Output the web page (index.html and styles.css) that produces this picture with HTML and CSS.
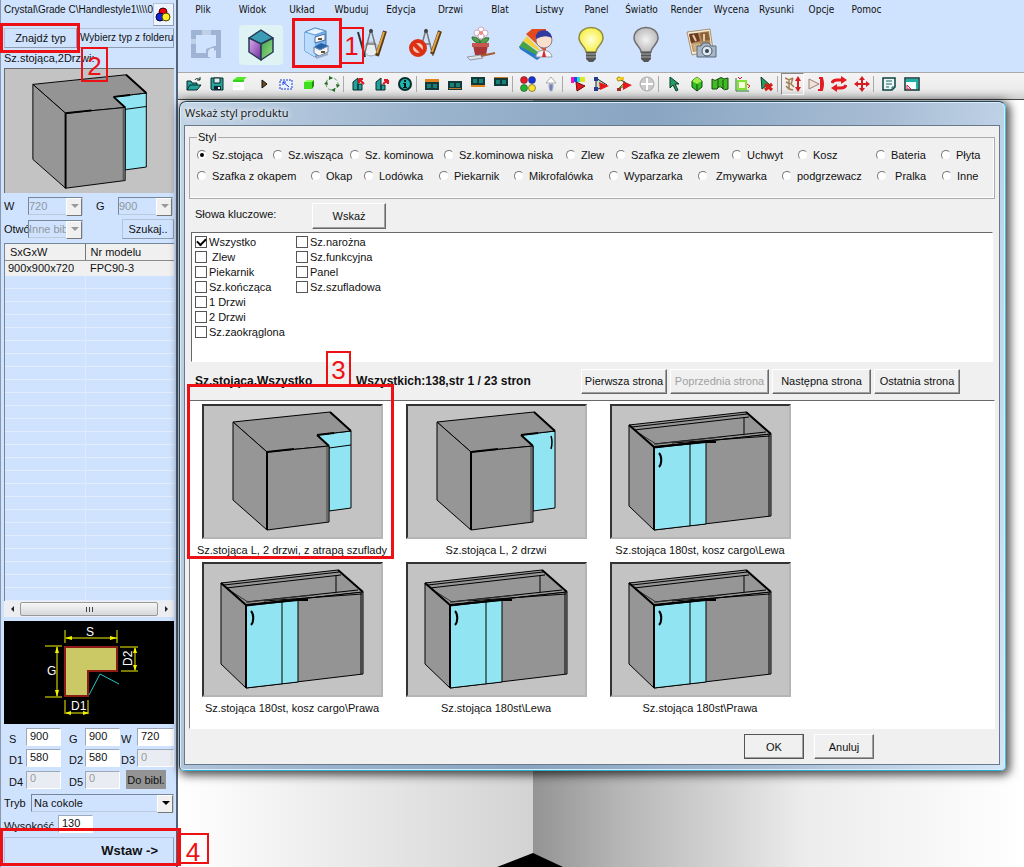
FILE: index.html
```html
<!DOCTYPE html>
<html lang="pl">
<head>
    <meta charset="UTF-8">
    <meta name="viewport" content="width=device-width, initial-scale=1.0">
    <title>Wskaż styl produktu</title>
    <link rel="stylesheet" href="styles.css">
</head>
<body>
    <!-- Shared cabinet drawings -->
    <svg class="defs" width="0" height="0" aria-hidden="true">
        <symbol id="corner" viewBox="0 0 177 131">
            <g stroke="#000" stroke-width="1" stroke-linejoin="round">
                <path d="M113 29L147 25V102L125 105V40Z" fill="#91e5f2"/>
                <path d="M29 16L126 6L147 25L113 29L125 40L63 46Z" fill="#949494"/>
                <path d="M29 16L63 46V124L29 94Z" fill="#969696"/>
                <path d="M63 46L125 40V116L63 124Z" fill="#949494"/>
                <path d="M123 41V116" stroke="#444"/>
                <path d="M126 6L147 25M113 29L125 40M63 46V124M63 46L90 43M113 29L130 27" fill="none" stroke-width="2"/>
            </g>
        </symbol>
        <symbol id="blind" viewBox="0 0 177 131">
            <g stroke="#000" stroke-width="1" stroke-linejoin="round" fill="none">
                <path d="M17 19L134 6L159 28L42 41Z" fill="#969696"/>
                <path d="M17 19L42 41V124L17 100Z" fill="#969696"/>
                <path d="M42 41L159 28V110L42 124Z" fill="#949494"/>
                <path d="M42 42L94 36V118L42 124Z" fill="#91e5f2"/>
                <path d="M78 38V120M157 29V110M132 12V28M22 24L137 11M20 21L135 8M42 38L154 26M60 37L158 30"/>
                <path d="M22 24L44 38L110 31" stroke="#333"/>
                <path d="M17 19L42 41L94 36M134 6L159 28M93 36H104M42 41V124" stroke-width="2"/>
                <path d="M47 47C50 50 50 58 47 61" stroke-width="2"/>
            </g>
        </symbol>
    </svg>

    <aside class="sidebar">
        <div class="path-row">
            <span class="path">Crystal\Grade C\Handlestyle1\\\\0</span>
            <button class="side-button color-button" aria-label="Kolory">
                <svg width="16" height="16" viewBox="0 0 16 16"><circle cx="8" cy="5" r="4" fill="#f00010" stroke="#400"/><circle cx="5" cy="10" r="4" fill="#1526d8" stroke="#003"/><circle cx="11" cy="10" r="4" fill="#ffec22" stroke="#440"/></svg>
            </button>
        </div>
        <div class="type-row">
            <div class="marked">
                <button class="side-button">Znajdź typ</button>
                <span class="frame frame-type"></span>
                <span class="badge badge-type">2</span>
            </div>
            <button class="side-button folder-button">Wybierz typ z folderu</button>
        </div>
        <div class="type-name">Sz.stojąca,2Drzwi:</div>
        <svg class="preview" viewBox="0 0 177 129" preserveAspectRatio="xMinYMin slice" role="img" aria-label="Szafka">
            <use href="#corner" width="177" height="131"/>
            <path d="M125 42L147 39" stroke="#000"/>
        </svg>
        <div class="filter-row">
            <label for="fw">W</label>
            <span class="select disabled"><select id="fw" disabled><option>720</option></select></span>
            <label for="fg" class="middle">G</label>
            <span class="select disabled"><select id="fg" disabled><option>900</option></select></span>
        </div>
        <div class="filter-row">
            <label for="fo">Otwó</label>
            <span class="select disabled"><select id="fo" disabled><option>Inne bib</option></select></span>
            <button class="side-button search-button">Szukaj..</button>
        </div>
        <div class="models">
            <table>
                <thead><tr><th>SxGxW</th><th>Nr modelu</th></tr></thead>
                <tbody><tr><td>900x900x720</td><td>FPC90-3</td></tr></tbody>
            </table>
        </div>
        <div class="scrollbar">
            <button class="arrow arrow-left" aria-label="W lewo"></button>
            <div class="thumb"><i></i><i></i><i></i></div>
            <button class="arrow arrow-right" aria-label="W prawo"></button>
        </div>
        <svg class="plan" viewBox="0 0 170 103">
            <path d="M61 26H113V50H84V75H61Z" fill="#cbc866" stroke="#8c1c14" stroke-width="2"/>
            <g stroke="#f4f400" fill="none">
                <path d="M61 9V22M113 9V22M62 17H113M41 25H58M41 76H58M53 26V75M116 26H134M117 50H134M131 27V49M61 79V93M84 79V93M62 92H84"/>
            </g>
            <path d="M61 17l7-2v4zM113 17l-7-2v4zM53 25l-2 7h4zM53 76l-2-7h4zM131 26l-2 6h4zM131 50l-2-6h4zM61 92l6-2v4zM85 92l-6-2v4z" fill="#f4f400"/>
            <path d="M85 74L96 53L115 63" stroke="#25c4c4" fill="none"/>
            <g class="plan-text">
                <text x="82" y="15">S</text>
                <text x="43" y="54">G</text>
                <text x="67" y="89">D1</text>
                <text x="128" y="45" transform="rotate(-90 128 45)">D2</text>
            </g>
        </svg>
        <div class="sizes">
            <label for="s">S</label><input id="s" type="text" value="900">
            <label for="g">G</label><input id="g" type="text" value="900">
            <label for="w">W</label><input id="w" type="text" value="720">
            <label for="d1">D1</label><input id="d1" type="text" value="580">
            <label for="d2">D2</label><input id="d2" type="text" value="580">
            <label for="d3">D3</label><input id="d3" type="text" value="0" disabled>
            <label for="d4">D4</label><input id="d4" type="text" value="0" disabled>
            <label for="d5">D5</label><input id="d5" type="text" value="0" disabled>
            <button class="library-button">Do bibl.</button>
        </div>
        <div class="mode-row">
            <label for="mode">Tryb</label>
            <span class="select"><select id="mode"><option>Na cokole</option></select></span>
        </div>
        <div class="height-row">
            <label for="height">Wysokość</label>
            <input id="height" type="text" value="130">
        </div>
        <div class="marked insert-row">
            <button class="side-button insert-button">Wstaw -&gt;</button>
            <span class="frame frame-insert"></span>
            <span class="badge badge-insert">4</span>
        </div>
    </aside>

    <main class="workspace">
        <nav class="menu">
            <button>Plik</button>
            <button>Widok</button>
            <button>Układ</button>
            <button>Wbuduj</button>
            <button>Edycja</button>
            <button>Drzwi</button>
            <button>Blat</button>
            <button>Listwy</button>
            <button>Panel</button>
            <button>Światło</button>
            <button>Render</button>
            <button>Wycena</button>
            <button>Rysunki</button>
            <button>Opcje</button>
            <button>Pomoc</button>
        </nav>

        <div class="ribbon">
            <button aria-label="Pomieszczenie">
                <svg width="36" height="36" viewBox="0 0 36 36"><path d="M3 4H33V32H28V24L22 26V32H3ZM8 9V27H18V23L26 20H28V9Z" fill="#9fb4d4" fill-rule="evenodd"/><path d="M14 4h9v5h-9zM3 13h5v5H3z" fill="#bfd0e8"/><path d="M20 31V27C20 23 23 22 26 22V31Z" fill="#d5e4fa"/></svg>
            </button>
            <button class="active" aria-label="Widok 3D">
                <svg width="36" height="36" viewBox="0 0 36 36"><defs><linearGradient id="cube-l" x1="0" y1="0" x2="1" y2="1"><stop offset="0" stop-color="#dcb0ee"/><stop offset="1" stop-color="#6f2b9a"/></linearGradient><linearGradient id="cube-r" x1="0" y1="0" x2="1" y2="1"><stop offset="0" stop-color="#3f9d46"/><stop offset="1" stop-color="#9be58c"/></linearGradient></defs><g stroke="#263a55" stroke-width="1.5" stroke-linejoin="round"><path d="M6 11L18 3L30 11L18 17Z" fill="#3c9bb5"/><path d="M6 11L18 17V33L6 25Z" fill="url(#cube-l)"/><path d="M18 17L30 11V25L18 33Z" fill="url(#cube-r)"/></g></svg>
            </button>
            <div class="marked">
                <button aria-label="Szafki">
                    <svg width="36" height="36" viewBox="0 0 36 36"><path d="M7 6L17 2L28 5L28 25L17 31L7 25Z" fill="#7fb5ee" stroke="#3d78be"/><path d="M7 6L17 9V31L7 25Z" fill="#b9dcff"/><path d="M7 6L17 2L28 5L17 9Z" fill="#e5f4ff" stroke="#5d97d5"/><path d="M17 11L27 8V14L17 17Z" fill="#f7f9fc" stroke="#486f9e"/><path d="M16 21L23 17L31 20L24 24Z" fill="#2762a8"/><path d="M16 21L22 24L30 20V26L21 30L16 27Z" fill="#f5f5f8" stroke="#66809f"/><path d="M20 13h4M23 26h4" stroke="#65512f" stroke-width="2"/><path d="M18 32L30 28" stroke="#9cabc0" stroke-width="2"/></svg>
                </button>
                <span class="frame frame-icon"></span>
                <span class="badge badge-icon">1</span>
            </div>
            <button aria-label="Projekt">
                <svg width="36" height="36" viewBox="0 0 36 36"><circle cx="18" cy="23" r="7" fill="#e9eef2" stroke="#9ba6b0"/><path d="M18 3L11 30M18 3L25 30M13 18H23" stroke="#777" stroke-width="1.5" fill="none"/><path d="M5 6L12 31" stroke="#333" stroke-width="2"/><path d="M32 5L24 30" stroke="#593b16" stroke-width="4"/><path d="M31 6L24 27" stroke="#e2a340" stroke-width="2"/><circle cx="18" cy="5" r="2" fill="#444"/></svg>
            </button>
            <button aria-label="Usuń projekt">
                <svg width="36" height="36" viewBox="0 0 36 36"><path d="M18 3L11 30M18 3L25 30M13 18H23" stroke="#777" stroke-width="1.5" fill="none"/><circle cx="18" cy="5" r="2" fill="#444"/><path d="M32 5L24 28" stroke="#593b16" stroke-width="4"/><path d="M31 6L24 26" stroke="#e2a340" stroke-width="2"/><circle cx="10" cy="22" r="7" fill="#f8c5b5" stroke="#dc3014" stroke-width="4"/><path d="M5 17L15 27" stroke="#dc3014" stroke-width="4"/></svg>
            </button>
            <button aria-label="Dodatki">
                <svg width="36" height="36" viewBox="0 0 36 36"><path d="M17 18V10M17 17C12 17 9 14 9 11C14 11 17 13 17 17C18 13 22 11 26 12C25 16 22 18 17 18" fill="#50a04a" stroke="#2b6b2c"/><g fill="#fff" stroke="#d6a5b5"><circle cx="18" cy="4" r="3"/><circle cx="14" cy="7" r="3"/><circle cx="22" cy="7" r="3"/><circle cx="18" cy="10" r="3"/></g><circle cx="18" cy="7" r="2" fill="#ed8a85"/><path d="M10 19H25L23 29H12Z" fill="#a63736"/><path d="M9 17H26V21H9Z" fill="#c65750"/><path d="M4 31L18 29L20 32L7 34Z" fill="#dfe4e8" stroke="#8b98a5"/><path d="M18 30L32 27" stroke="#a85f35" stroke-width="2"/></svg>
            </button>
            <button aria-label="Kolory">
                <svg width="36" height="36" viewBox="0 0 36 36"><path d="M1 21L5 15L24 29L20 33Z" fill="#46a346"/><path d="M2 23L19 34L23 31L1 20Z" fill="#2a78cb"/><path d="M5 15L9 10L26 28Z" fill="#f2d23f"/><path d="M8 8L14 3L28 3L28 27Z" fill="#e24a1d"/><path d="M18 31C18 22 33 22 34 31Z" fill="#f4f4f8" stroke="#99a"/><circle cx="26" cy="14" r="8" fill="#f9dfcd" stroke="#8b7a80"/><path d="M18 13C16 2 33 1 34 12Q27 8 18 13" fill="#303b9e"/><path d="M26 23L24 31H28Z" fill="#d9242b"/></svg>
            </button>
            <button aria-label="Włącz światło">
                <svg width="36" height="38" viewBox="0 0 36 38"><defs><radialGradient id="lit"><stop offset="0" stop-color="#ffffd8"/><stop offset="1" stop-color="#f7ef47"/></radialGradient></defs><path d="M13 27C13 22 6 19 6 13C6 -1 30 -1 30 13C30 19 23 22 23 27Z" fill="url(#lit)" stroke="#8f8a45" stroke-width="1.5"/><path d="M13 27H23V34L20 37H16L13 34Z" fill="#555"/><path d="M13 29H23M13 32H23" stroke="#aaa"/></svg>
            </button>
            <button aria-label="Wyłącz światło">
                <svg width="36" height="38" viewBox="0 0 36 38"><defs><radialGradient id="unlit"><stop offset="0" stop-color="#f3f3f3"/><stop offset="1" stop-color="#bcbcbc"/></radialGradient></defs><path d="M13 27C13 22 6 19 6 13C6 -1 30 -1 30 13C30 19 23 22 23 27Z" fill="url(#unlit)" stroke="#707070" stroke-width="1.5"/><path d="M13 27H23V34L20 37H16L13 34Z" fill="#555"/><path d="M13 29H23M13 32H23" stroke="#aaa"/></svg>
            </button>
            <button aria-label="Zdjęcia">
                <svg width="36" height="36" viewBox="0 0 36 36"><path d="M4 6L27 3L30 24L9 29Z" fill="#f5ead3" stroke="#aa9270"/><path d="M6 8L26 5L28 22L10 26Z" fill="#b08a60"/><path d="M6 8L15 7L17 15L8 17Z" fill="#6b3a22"/><path d="M17 7L25 6L27 14L19 15Z" fill="#8a6038"/><path d="M9 18L17 17L18 24L11 25Z" fill="#cfae84"/><path d="M10 9L13 15M21 8V15" stroke="#e7c79f" stroke-width="2"/><path d="M14 20H18L20 17H26L28 20H33V31H14Z" fill="#a9b6c4" stroke="#596a7c"/><circle cx="24" cy="25" r="5" fill="#e1e8ef" stroke="#46586b"/><circle cx="24" cy="25" r="2" fill="#31455c"/></svg>
            </button>
        </div>

        <div class="toolbar">
            <button aria-label="Otwórz"><svg width="16" height="16" viewBox="0 0 16 16"><path d="M1 14V5H5L6 7H11V9M1 14L4 9H15L11 14Z" fill="#27a29b" stroke="#062d2c"/><path d="M9 4C10 2 12 2 14 4M14 1V4H11" fill="none" stroke="#062d2c"/></svg></button>
            <button aria-label="Zapisz"><svg width="16" height="16" viewBox="0 0 16 16"><path d="M2 2H14V14H3L2 13Z" fill="#27a29b" stroke="#062d2c"/><path d="M5 2H11V7H5Z" fill="#e3eeee" stroke="#062d2c"/><path d="M5 10H12V14H5Z" fill="#123"/><path d="M9 11h2v2H9z" fill="#fff"/></svg></button>
            <button aria-label="Blat"><svg width="16" height="16" viewBox="0 0 16 16"><path d="M1 4L5 1H15L12 4Z" fill="#58e62d"/><path d="M1 5H12V14H1Z" fill="#fff"/><path d="M12 4L15 1V10L12 14Z" fill="#eee"/><path d="M1 4H12V6H1Z" fill="#34d51d"/></svg></button>
            <button aria-label="Odtwórz"><svg width="16" height="16" viewBox="0 0 16 16"><path d="M7 4L12 8L7 12Z" fill="#6b4b20" stroke="#111"/></svg></button>
            <button aria-label="Zaznacz"><svg width="16" height="16" viewBox="0 0 16 16"><path d="M2 4H14V13H2Z" fill="#e6f2ff" stroke="#1c38d6" stroke-dasharray="2 1"/><path d="M5 6L11 11M5 9V6H8" stroke="#1c38d6" fill="none"/></svg></button>
            <button aria-label="Bryła"><svg width="16" height="16" viewBox="0 0 16 16"><path d="M3 6L6 4H13L11 6Z" fill="#8dff5a"/><path d="M3 6H11V13H3Z" fill="#3fde20"/><path d="M11 6L13 4V10L11 13Z" fill="#1c8c12"/></svg></button>
            <button aria-label="Obróć"><svg width="16" height="16" viewBox="0 0 16 16"><circle cx="8" cy="8" r="6" fill="none" stroke="#5a9a5a" stroke-dasharray="3 2"/><path d="M5 0L9 2L5 4ZM16 9L13 12L12 8ZM0 8L3 5L4 9ZM11 12L7 14L11 16Z" fill="#246c24"/></svg></button>
            <i class="separator"></i>
            <button aria-label="Import"><svg width="16" height="16" viewBox="0 0 16 16"><path d="M2 14V6L7 2V14ZM7 8H11V14H7Z" fill="#23a29b" stroke="#062d2c"/><path d="M8 3L13 8M8 3H12M8 3V7" stroke="#e31624" stroke-width="2"/></svg></button>
            <button aria-label="Eksport"><svg width="16" height="16" viewBox="0 0 16 16"><path d="M2 14V6L7 2V14ZM7 9H11V14H7Z" fill="#23a29b" stroke="#062d2c"/><path d="M9 8L14 4M14 4H10M14 4V8" stroke="#e31624" stroke-width="2"/></svg></button>
            <button aria-label="Informacje"><svg width="16" height="16" viewBox="0 0 16 16"><circle cx="8" cy="8" r="6" fill="#22b5ad" stroke="#072c2c" stroke-width="2"/><path d="M7 4h2v2H7zM6 7h3v4h1v1H6v-1h1V8H6z" fill="#041818"/></svg></button>
            <i class="separator"></i>
            <button aria-label="Góra"><svg width="16" height="16" viewBox="0 0 16 16"><path d="M1 3H15V6H1Z" fill="#df8520"/><path d="M1 6H15V14H1Z" fill="#123838"/><path d="M3 8H7V12H3ZM9 8H13V12H9Z" fill="#178077"/></svg></button>
            <button aria-label="Dół"><svg width="16" height="16" viewBox="0 0 16 16"><path d="M1 5H15V14H1Z" fill="#123838"/><path d="M3 7H7V11H3ZM9 7H13V11H9Z" fill="#178077"/><path d="M2 12H14V13H2Z" fill="#c47926"/></svg></button>
            <button aria-label="Lewo"><svg width="16" height="16" viewBox="0 0 16 16"><path d="M1 1H15V9H1Z" fill="#123838"/><path d="M3 3H7V7H3ZM9 3H13V7H9Z" fill="#178077"/><path d="M1 9H15V11H1Z" fill="#df8520"/></svg></button>
            <button aria-label="Prawo"><svg width="16" height="16" viewBox="0 0 16 16"><path d="M1 1H15V10H1Z" fill="#123838"/><path d="M3 4H7V8H3ZM9 4H13V8H9Z" fill="#178077"/><path d="M1 1H15V2H1Z" fill="#c47926"/></svg></button>
            <i class="separator"></i>
            <button aria-label="Materiały"><svg width="16" height="16" viewBox="0 0 16 16"><g stroke="#222" stroke-width=".5"><circle cx="4" cy="4" r="3.5" fill="#ed1724"/><circle cx="12" cy="4" r="3.5" fill="#1433dc"/><circle cx="4" cy="12" r="3.5" fill="#20b42c"/><circle cx="12" cy="12" r="3.5" fill="#ffe32b"/></g></svg></button>
            <button aria-label="Lampa"><svg width="16" height="16" viewBox="0 0 16 16"><path d="M8 1L13 7H3Z" fill="#fff" stroke="#aaa"/><path d="M6 8H10V12L9 15H7L6 12Z" fill="#7280b5" stroke="#aeb5cf"/></svg></button>
            <i class="separator"></i>
            <button aria-label="Paleta"><svg width="16" height="16" viewBox="0 0 16 16"><path d="M1 1H4V7H1Z" fill="#ed19bd"/><path d="M4 1H7V6H4Z" fill="#2643ef"/><path d="M7 1H10V6H7Z" fill="#24dbd8"/><path d="M10 1H15V6H10Z" fill="#dcea26"/><path d="M6 6L15 10L7 15Z" fill="#e7161d" stroke="#6f0a0a"/></svg></button>
            <button aria-label="Animacja"><svg width="16" height="16" viewBox="0 0 16 16"><path d="M3 2V14L14 9Z" fill="#bde2c9" stroke="#222"/><path d="M6 6L16 10L7 14Z" fill="#e7161d"/><path d="M1 1H5V5H1ZM1 11H5V15H1Z" fill="#273b8d"/></svg></button>
            <button aria-label="Trasa"><svg width="16" height="16" viewBox="0 0 16 16"><path d="M3 3L9 6L3 12L14 9Z" fill="#74d652" stroke="#663"/><path d="M7 6L16 9L7 14Z" fill="#e7161d"/><circle cx="3" cy="3" r="2" fill="#ffe32b" stroke="#a80"/><path d="M1 12H5V15H1Z" fill="#a32b20"/><path d="M4 1H8V4H4Z" fill="#efc52a"/></svg></button>
            <button aria-label="Cel"><svg width="16" height="16" viewBox="0 0 16 16"><circle cx="8" cy="8" r="7" fill="#c9c9c9" stroke="#aaa"/><path d="M8 2V14M2 8H14" stroke="#fff" stroke-width="2"/></svg></button>
            <i class="separator"></i>
            <button aria-label="Wskaźnik"><svg width="16" height="16" viewBox="0 0 16 16"><path d="M4 1L13 8H9L12 14L10 15L7 9L4 12Z" fill="#229e60" stroke="#0b3c27"/></svg></button>
            <button aria-label="Sześcian"><svg width="16" height="16" viewBox="0 0 16 16"><path d="M3 5L8 1L13 5V11L8 15L3 11Z" fill="#2fbe24" stroke="#17460f"/><path d="M3 5L8 8L13 5L8 1Z" fill="#a0ee47"/><path d="M8 8V15" stroke="#17460f"/></svg></button>
            <button aria-label="Plan"><svg width="18" height="16" viewBox="0 0 18 16"><path d="M1 3Q4 6 7 3T13 3L17 2V13Q13 15 11 12T6 13L1 13Z" fill="#40bb24" stroke="#164911"/><path d="M7 3V12M12 4V13" stroke="#164911"/></svg></button>
            <button aria-label="Wymiary"><svg width="16" height="16" viewBox="0 0 16 16"><path d="M1 2V15H14" fill="none" stroke="#1c7d33"/><path d="M3 5H11V13H3Z" fill="#f7ffe1" stroke="#84e32d" stroke-width="2"/><path d="M3 1L5 3L7 1M12 8L15 10L13 12" stroke="#e31624" fill="none"/></svg></button>
            <button aria-label="Usuń"><svg width="16" height="16" viewBox="0 0 16 16"><path d="M3 1L12 9L8 10L4 13Z" fill="#229e60" stroke="#0b3c27"/><path d="M7 8L14 14M14 8L7 14" stroke="#d51d18" stroke-width="3"/></svg></button>
            <i class="separator"></i>
            <button class="pressed" aria-label="Wysokość"><svg width="16" height="16" viewBox="0 0 16 16"><path d="M0 2L4 4L8 2M1 6L5 8M1 10L4 13L8 14M4 4V13M8 2L6 8L9 11" stroke="#a27d51" stroke-width="1.5" fill="none"/><path d="M13 4V12" stroke="#d51d23" stroke-width="2"/><path d="M13 0L16 5H10ZM13 16L16 11H10Z" fill="#d51d23"/></svg></button>
            <button aria-label="Odbicie"><svg width="16" height="16" viewBox="0 0 16 16"><path d="M1 3L11 8L1 13Z" fill="#ece4dc" stroke="#a27d71"/><path d="M11 2H14Q16 8 14 14H10M13 2V13" fill="none" stroke="#e31b23" stroke-width="2"/></svg></button>
            <button aria-label="Odwróć"><svg width="16" height="16" viewBox="0 0 16 16"><path d="M1 7Q2 4 6 4H11M15 9Q14 12 10 12H5" fill="none" stroke="#e31b23" stroke-width="3"/><path d="M10 0L16 4L10 8ZM6 8L0 12L6 16Z" fill="#e31b23"/></svg></button>
            <button aria-label="Przesuń"><svg width="16" height="16" viewBox="0 0 16 16"><path d="M8 3V13M3 8H13" stroke="#d51d23" stroke-width="2"/><path d="M8 0L11 4H5ZM8 16L11 12H5ZM0 8L4 5V11ZM16 8L12 5V11Z" fill="#d51d23"/></svg></button>
            <i class="separator"></i>
            <button aria-label="Notatka"><svg width="16" height="16" viewBox="0 0 16 16"><path d="M2 2H14V11L11 14H2Z" fill="#eef6f5" stroke="#0d4141" stroke-width="1.5"/><path d="M5 5H11M5 8H11M5 11H8M11 14V11H14" stroke="#126868" fill="none"/></svg></button>
            <button aria-label="Okno"><svg width="16" height="16" viewBox="0 0 16 16"><path d="M1 2H15V14H1Z" fill="#f4ffff" stroke="#0d3535" stroke-width="1.5"/><path d="M2 3H14V6H2ZM12 6H14V13H12Z" fill="#1cb2a8"/><path d="M3 13V9L7 13Z" fill="none" stroke="#e31b43"/></svg></button>
        </div>

        <div class="canvas">
            <svg class="floor" viewBox="0 0 846 14" preserveAspectRatio="none" aria-hidden="true"><path d="M319 14L355 0L385 14Z"/></svg>

            <section class="dialog" role="dialog" aria-labelledby="dialog-title">
                <h1 id="dialog-title">Wskaż styl produktu</h1>
                <div class="client">
                    <fieldset class="styles">
                        <legend>Styl</legend>
                        <div class="radios radios-top">
                            <label><input type="radio" name="style" checked>Sz.stojąca</label>
                            <label><input type="radio" name="style">Sz.wisząca</label>
                            <label><input type="radio" name="style">Sz. kominowa</label>
                            <label><input type="radio" name="style">Sz.kominowa niska</label>
                            <label><input type="radio" name="style">Zlew</label>
                            <label><input type="radio" name="style">Szafka ze zlewem</label>
                            <label><input type="radio" name="style">Uchwyt</label>
                            <label><input type="radio" name="style">Kosz</label>
                            <label><input type="radio" name="style">Bateria</label>
                            <label><input type="radio" name="style">Płyta</label>
                        </div>
                        <div class="radios radios-bottom">
                            <label><input type="radio" name="style">Szafka z okapem</label>
                            <label><input type="radio" name="style">Okap</label>
                            <label><input type="radio" name="style">Lodówka</label>
                            <label><input type="radio" name="style">Piekarnik</label>
                            <label><input type="radio" name="style">Mikrofalówka</label>
                            <label><input type="radio" name="style">Wyparzarka</label>
                            <label><input type="radio" name="style">&nbsp;Zmywarka</label>
                            <label><input type="radio" name="style">podgrzewacz</label>
                            <label><input type="radio" name="style">&nbsp;Pralka</label>
                            <label><input type="radio" name="style">Inne</label>
                        </div>
                    </fieldset>

                    <div class="keywords-row">
                        <span>Słowa kluczowe:</span>
                        <button class="button">Wskaż</button>
                    </div>
                    <div class="keywords">
                        <label><input type="checkbox" checked>Wszystko</label>
                        <label><input type="checkbox">&nbsp;Zlew</label>
                        <label><input type="checkbox">Piekarnik</label>
                        <label><input type="checkbox">Sz.kończąca</label>
                        <label><input type="checkbox">1 Drzwi</label>
                        <label><input type="checkbox">2 Drzwi</label>
                        <label><input type="checkbox">Sz.zaokrąglona</label>
                        <label><input type="checkbox">Sz.narożna</label>
                        <label><input type="checkbox">Sz.funkcyjna</label>
                        <label><input type="checkbox">Panel</label>
                        <label><input type="checkbox">Sz.szufladowa</label>
                    </div>

                    <div class="paging">
                        <strong class="current">Sz.stojąca,Wszystko</strong>
                        <strong class="count">Wszystkich:138,str 1 / 23 stron</strong>
                        <button class="button">Pierwsza strona</button>
                        <button class="button wide" disabled>Poprzednia strona</button>
                        <button class="button wide">Następna strona</button>
                        <button class="button">Ostatnia strona</button>
                    </div>

                    <div class="results">
                        <figure class="marked">
                            <svg viewBox="0 0 177 131"><use href="#corner"/><path d="M125 42L147 39" stroke="#000"/></svg>
                            <figcaption>Sz.stojąca L, 2 drzwi, z atrapą szuflady</figcaption>
                            <span class="frame frame-result"></span>
                            <span class="badge badge-result">3</span>
                        </figure>
                        <figure>
                            <svg viewBox="0 0 177 131"><use href="#corner"/><path d="M143 30Q145 36 143 43" fill="none" stroke="#000" stroke-width="1.5"/></svg>
                            <figcaption>Sz.stojąca L, 2 drzwi</figcaption>
                        </figure>
                        <figure>
                            <svg viewBox="0 0 177 131"><use href="#blind"/></svg>
                            <figcaption>Sz.stojąca 180st, kosz cargo\Lewa</figcaption>
                        </figure>
                        <figure>
                            <svg viewBox="0 0 177 131"><use href="#blind"/></svg>
                            <figcaption>Sz.stojąca 180st, kosz cargo\Prawa</figcaption>
                        </figure>
                        <figure>
                            <svg viewBox="0 0 177 131"><use href="#blind"/></svg>
                            <figcaption>Sz.stojąca 180st\Lewa</figcaption>
                        </figure>
                        <figure>
                            <svg viewBox="0 0 177 131"><use href="#blind"/></svg>
                            <figcaption>Sz.stojąca 180st\Prawa</figcaption>
                        </figure>
                    </div>

                    <div class="actions">
                        <button class="button default">OK</button>
                        <button class="button">Anuluj</button>
                    </div>
                </div>
            </section>
        </div>
    </main>
</body>
</html>
```

FILE: styles.css
```css
* {
    box-sizing: border-box;
}

body {
    display: flex;
    min-height: 100vh;
    margin: 0;
    font: 11px/14px "Liberation Sans", Arial, sans-serif;
    color: #111;
    background: #d0e3fe;
}

button, input, select {
    font: inherit;
    color: inherit;
    margin: 0;
    padding: 0;
}

button {
    white-space: nowrap;
}

svg {
    display: block;
}

.defs {
    position: absolute;
}

/* Red step markers */
.marked {
    position: relative;
}

.frame, .badge {
    position: absolute;
    z-index: 5;
    pointer-events: none;
}

.frame {
    border: 3px solid #ed1014;
}

.badge {
    width: 27px;
    height: 35px;
    border: 2px solid #ed1014;
    color: #ed1014;
    font-size: 26px;
    line-height: 35px;
    text-align: center;
}

.frame-type { inset: -5px -3px -5px -4px; }
.badge-type { left: 77px; top: 19px; }
.frame-icon { inset: -1px 1px -1px 4px; }
.badge-icon { left: 51px; top: 8px; width: 25px; height: 37px; }
.frame-result { inset: -20px 0 3px -3px; }
.badge-result { left: 136px; top: -53px; width: 25px; }
.frame-insert { inset: -9px -7px -2px -4px; }
.badge-insert { left: 173px; top: -4px; width: 32px; height: 31px; line-height: 34px; }

/* Left panel */
.sidebar {
    display: flex;
    flex-direction: column;
    flex: none;
    width: 178px;
    padding: 3px 2px 3px 3px;
    background: #d0e3fe;
    border-left: 1px solid #8898ad;
    border-right: 2px solid #53647a;
}

.side-button {
    height: 20px;
    background: #d0e3fe;
    border: 1px solid #8d9db2;
    border-top-color: #b3c3d8;
    border-left-color: #b3c3d8;
}

.path-row {
    display: flex;
    justify-content: space-between;
    height: 23px;
}

.path {
    font-size: 10px;
    white-space: nowrap;
}

.color-button {
    display: flex;
    align-items: center;
    justify-content: center;
    width: 23px;
    height: 23px;
    background: #eef4fe;
}

.type-row {
    display: flex;
    gap: 2px;
    margin-top: 2px;
}

.type-row .marked .side-button {
    display: block;
    width: 73px;
}

.folder-button {
    flex: 1;
    min-width: 0;
    font-size: 10px;
}

.type-name {
    height: 20px;
    padding-top: 3px;
}

.preview {
    width: 100%;
    height: 125px;
    background: #c3c3c3;
    border-top: 1px solid #6b6b6b;
    border-left: 1px solid #6b6b6b;
}

.filter-row {
    display: flex;
    align-items: center;
    height: 20px;
    margin-top: 3px;
}

.filter-row label {
    flex: none;
    width: 24px;
}

.filter-row .middle {
    width: 22px;
    margin-left: 13px;
}

.filter-row .select {
    width: 55px;
}

.select {
    position: relative;
    display: block;
    height: 18px;
    border: 1px solid #77879b;
    border-right-color: #b9c9de;
    border-bottom-color: #b9c9de;
}

.select select {
    appearance: none;
    width: 100%;
    height: 16px;
    border: 0;
    background: transparent;
}

.select::after {
    content: "";
    position: absolute;
    top: 0;
    right: 0;
    width: 14px;
    height: 16px;
    border: 1px solid;
    border-color: #fff #777 #777 #fff;
    background: #f0f0f0;
    pointer-events: none;
}

.select::before {
    content: "";
    position: absolute;
    z-index: 1;
    top: 6px;
    right: 3px;
    border: solid transparent;
    border-width: 4px 4px 0;
    border-top-color: #000;
    pointer-events: none;
}

.disabled select {
    color: #8f979f;
    opacity: 1;
}

.disabled::before {
    border-top-color: #9a9a9a;
}

.mode-row select {
    padding-left: 2px;
}

.search-button {
    width: 52px;
    margin-left: auto;
}

.models {
    flex: 1;
    margin-top: 4px;
    border-top: 1px solid #77879b;
    border-left: 1px solid #77879b;
    background:
        linear-gradient(#dfebfd, #dfebfd) 80px 0 / 1px 100% no-repeat,
        repeating-linear-gradient(#d0e3fe 0 12px, #e2eeff 12px 13px) 0 32px;
}

.models table {
    width: 100%;
    border-collapse: collapse;
    table-layout: fixed;
    background: #f0f0f0;
}

.models th, .models td {
    height: 16px;
    padding: 0 0 0 3px;
    font-weight: normal;
    text-align: left;
}

.models th {
    padding-left: 5px;
    border-right: 1px solid #777;
    border-bottom: 1px solid #8c8c8c;
}

.models th:first-child {
    width: 80px;
}

.models td + td {
    padding-left: 5px;
}

.models th:last-child {
    border-right: 0;
}

.scrollbar {
    display: flex;
    align-items: center;
    height: 16px;
    background: #eceef1;
}

.arrow {
    width: 16px;
    height: 16px;
    border: 0;
    background: none;
}

.arrow::before {
    content: "";
    display: block;
    width: 0;
    margin: 0 auto;
    border: 3px solid transparent;
}

.arrow-left::before { border-left: 0; border-right-color: #222; }
.arrow-right::before { border-right: 0; border-left-color: #222; }

.thumb {
    display: flex;
    flex: 1;
    align-items: center;
    justify-content: center;
    gap: 2px;
    height: 14px;
    border: 1px solid #999;
    border-radius: 2px;
    background: linear-gradient(#f7f7f7, #d5d7da);
}

.thumb i {
    width: 1px;
    height: 5px;
    background: #444;
}

.plan {
    width: 100%;
    height: 103px;
    margin-top: 4px;
    background: #000;
}

.plan-text {
    fill: #fff;
    font-size: 12px;
}

.sizes {
    display: grid;
    grid-template-columns: 22px 35px 24px 35px 17px 1fr;
    row-gap: 3px;
    align-items: center;
    margin-top: 4px;
}

.sizes label {
    padding: 4px 0 0 5px;
}

.sizes label:nth-of-type(3n + 2) {
    padding-left: 8px;
}

.sizes label:nth-of-type(3n) {
    padding-left: 1px;
}

.sizes input, .height-row input {
    min-width: 0;
    height: 18px;
    padding: 0 0 3px 3px;
    border: 1px solid;
    border-color: #9ba9bb #fff #fff #9ba9bb;
    background: #fff;
}

.sizes input:disabled {
    background: #e9edf3;
    color: #999;
}

.library-button {
    grid-column: 5 / 7;
    width: 40px;
    height: 19px;
    margin-left: 6px;
    border: 0;
    background: #939393;
}

.mode-row {
    display: flex;
    align-items: center;
    height: 18px;
    margin-top: 5px;
}

.mode-row label {
    width: 27px;
}

.mode-row .select {
    flex: 1;
}

.height-row {
    display: flex;
    margin-top: 3px;
}

.height-row label {
    width: 54px;
    padding-top: 4px;
}

.height-row input {
    width: 35px;
}

.insert-row {
    margin-top: 4px;
}

.insert-button {
    display: block;
    width: 100%;
    height: 27px;
    padding-right: 15px;
    text-align: right;
    font-size: 13px;
    font-weight: bold;
}

/* Right side: menu, ribbon, toolbar */
.workspace {
    display: flex;
    flex: 1;
    flex-direction: column;
    min-width: 0;
}

.menu {
    display: grid;
    grid-template-columns: repeat(4, 50px 49px) repeat(7, 45px);
    height: 19px;
    font: 10px/18px "DejaVu Sans Condensed", "DejaVu Sans", sans-serif;
}

.menu button, .ribbon button, .toolbar button {
    border: 0;
    background: none;
}

.ribbon {
    display: grid;
    grid-template-columns: repeat(10, 55px);
    height: 53px;
}

.ribbon .marked {
    height: 48px;
}

.ribbon button {
    display: flex;
    align-items: center;
    justify-content: center;
    width: 55px;
    height: 50px;
}

.ribbon .active {
    justify-self: center;
    align-self: start;
    width: 44px;
    height: 40px;
    margin-top: 6px;
    border-radius: 4px;
    background: #dff3f4;
}

.toolbar {
    display: flex;
    align-items: center;
    height: 28px;
    padding: 0 0 4px 4px;
    border-top: 1px solid #aaa;
    border-bottom: 1px solid #444;
    background: linear-gradient(#f4f4f4, #ececec 60%, #cfcfcf);
}

.toolbar button {
    display: flex;
    flex: none;
    align-items: center;
    justify-content: center;
    width: 23px;
    height: 22px;
}

.toolbar .pressed {
    border: 1px solid;
    border-color: #888 #fff #fff #888;
}

.separator {
    flex: none;
    width: 4px;
    height: 16px;
    border-left: 1px solid #aaa;
}

.canvas {
    position: relative;
    display: flex;
    flex: 1;
    flex-direction: column;
    justify-content: flex-end;
    background: linear-gradient(90deg, #fff, #d3d3d3 42%, #949494 42%, #b5b5b5 52%, #ececec 74%, #fff);
}

.floor {
    width: 100%;
    height: 14px;
}

/* Dialog window */
.dialog {
    position: absolute;
    top: 1px;
    left: 1px;
    right: 18px;
    padding: 0 5px 5px 4px;
    border: 1px solid #24465a;
    border-right-color: #3cc4e4;
    border-bottom-color: #2ab0cf;
    border-radius: 7px 7px 5px 5px;
    background: linear-gradient(100deg, #c4d5e6, #9db5ce 25%, #89a5c2 50%, #a8bdd4 75%, #d4e5f8);
    box-shadow: inset 0 0 0 1px #dcebf8, 2px 2px 10px 2px rgba(0, 0, 0, .7);
}

.dialog h1 {
    margin: 0;
    padding: 2px 1px 0;
    height: 23px;
    font: 11px/18px "Open Sans", "Noto Sans", sans-serif;
    text-shadow: 0 0 6px #fff, 0 0 6px #fff;
}

.client {
    padding: 4px;
    border: 1px solid #67798a;
    background: #f0f0f0;
}

.button {
    height: 25px;
    border: 1px solid;
    border-color: #fff #696969 #696969 #fff;
    box-shadow: inset -1px -1px #a0a0a0;
    background: #f0f0f0;
}

.button:disabled {
    color: #a0a0a0;
}

.styles {
    height: 69px;
    min-width: 0;
    margin: 0;
    padding: 0 7px;
    border: 1px solid #aaa;
    box-shadow: inset -1px -1px #fff;
}

.styles legend {
    height: 14px;
    padding: 0 2px 0 1px;
}

.radios {
    display: grid;
    height: 21px;
    align-items: center;
}

.radios-top {
    grid-template-columns: 76px 77px 94px 122px 50px 116px 66px 78px 65px auto;
}

.radios-bottom {
    grid-template-columns: 114px 53px 75px 75px 95px 89px 84px 95px 65px auto;
}

.radios label, .keywords label {
    display: flex;
    align-items: center;
    white-space: nowrap;
}

.radios input {
    appearance: none;
    display: grid;
    place-content: center;
    width: 10px;
    height: 10px;
    margin-right: 5px;
    border: 1px solid;
    border-color: #777 #eee #eee #777;
    border-radius: 50%;
    background: #fff;
}

.radios input:checked::before {
    content: "";
    width: 4px;
    height: 4px;
    border-radius: 50%;
    background: #000;
}

.keywords-row {
    display: flex;
    margin: 4px 0 3px 6px;
}

.keywords-row span {
    width: 117px;
    padding-top: 4px;
}

.keywords-row .button {
    width: 74px;
    height: 26px;
}

.keywords {
    display: grid;
    grid-template-rows: repeat(7, 15px);
    grid-auto-flow: column;
    grid-auto-columns: 101px;
    height: 130px;
    margin: 0 2px;
    padding: 1px 3px;
    border: 1px solid;
    border-color: #696969 #fff #fff #696969;
    background: #fff;
}

.keywords input {
    appearance: none;
    width: 12px;
    height: 12px;
    margin-right: 2px;
    border: 1px solid #555;
    background: #fff;
}

.keywords input:checked::before {
    content: "";
    display: block;
    width: 7px;
    height: 4px;
    margin: 1px;
    border: solid #000;
    border-width: 0 0 2px 2px;
    transform: rotate(-45deg);
}

.paging {
    display: flex;
    align-items: center;
    gap: 3px;
    height: 38px;
    padding-left: 6px;
}

.paging strong {
    font-size: 12px;
}

.current {
    width: 158px;
}

.count {
    width: 222px;
}

.paging .button {
    width: 86px;
}

.paging .wide {
    width: 99px;
}

.results {
    display: grid;
    grid-template-columns: repeat(3, 204px);
    grid-auto-rows: 158px;
    height: 329px;
    padding-top: 3px;
    border: 1px solid;
    border-color: #696969 #fff #fff #808080;
    background: #fff;
}

.results figure {
    display: flex;
    flex-direction: column;
    align-items: center;
    gap: 4px;
    margin: 0;
}

.results svg {
    width: 181px;
    height: 135px;
    border: 2px solid;
    border-color: #333 #b5b5b5 #b5b5b5 #333;
    background: #c3c3c3;
}

.actions {
    display: flex;
    justify-content: flex-end;
    gap: 10px;
    padding: 5px 121px 1px 0;
}

.actions .button {
    width: 60px;
}

.default {
    border-color: #555;
}
```
